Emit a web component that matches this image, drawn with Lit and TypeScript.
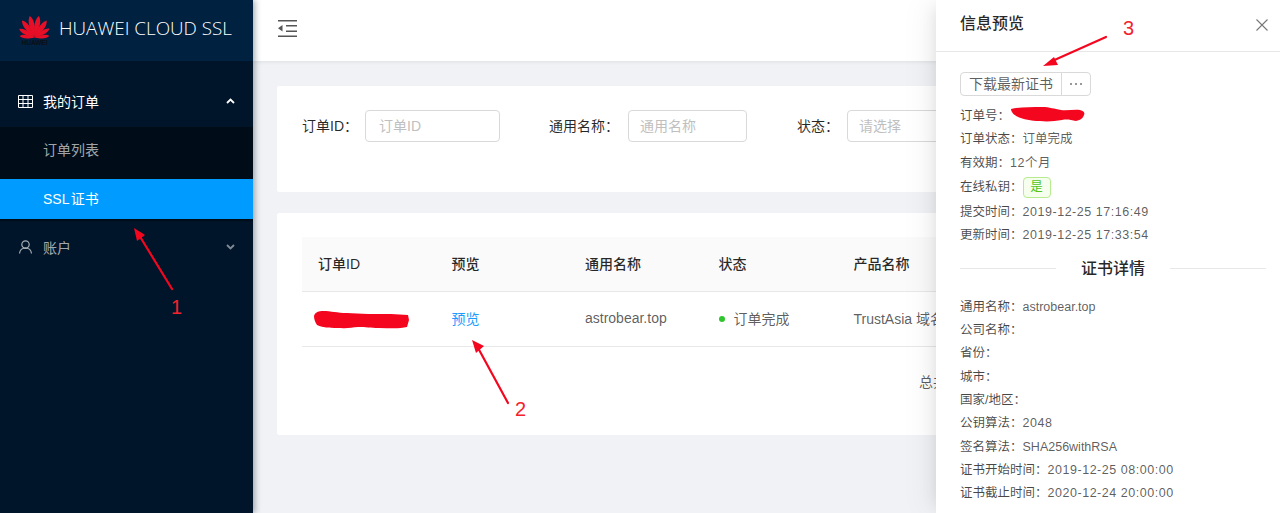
import { LitElement, html, css, svg } from "lit";
import { customElement } from "lit/decorators.js";

const petals: [number, number][] = [
  [-84, 15], [-60, 17.5], [-36, 21], [-12, 22], [12, 22], [36, 21], [60, 17.5], [84, 15],
];
const petal = (l: number) => {
  const w = l * 0.17;
  return `M14.5 21.5C${14.5 - w} ${21.5 - l * 0.5} ${14.5 - w * 0.9} ${21.5 - l * 0.82} ${14.5 - w * 0.05} ${21.5 - l}C${14.5 + w * 0.9} ${21.5 - l * 0.82} ${14.5 + w} ${21.5 - l * 0.5} 14.5 21.5Z`;
};

@customElement("app-root")
export class AppRoot extends LitElement {
  static styles = css`
    :host { display: block; width: 1280px; height: 513px; position: relative; overflow: hidden; background: #f0f2f5;
      font-family: "Liberation Sans", "Noto Sans CJK SC", sans-serif; font-size: 14px; color: rgba(0,0,0,.65); }
    * { box-sizing: border-box; }
    .layout { display: flex; height: 513px; }
    .side { width: 253px; flex: none; background: #001529; color: rgba(255,255,255,.65); box-shadow: 2px 0 6px rgba(0,21,41,.35); z-index: 2; }
    .brand { height: 61px; background: #002140; display: flex; align-items: center; padding: 0 0 5px 20px; gap: 10px; }
    .logo { width: 29px; display: flex; flex-direction: column; align-items: center; margin-top: 6px; }
    .logo svg { display: block; overflow: visible; }
    .logo span { font-size: 6.5px; line-height: 7px; margin-top: 1px; font-weight: 700; color: #0b0f14; }
    .brand-name { color: #fff; font-family: "Open Sans", sans-serif; font-weight: 300; font-size: 18.850px; white-space: nowrap; }
    .menu { padding-top: 16px; }
    .item { height: 50px; display: flex; align-items: center; padding-left: 18px; gap: 10px; }
    .item.open { color: #fff; padding-bottom: 2px; }
    .item .lbl { flex: 1; }
    .chev { margin-right: 18px; display: block; }
    .sub { background: #000c17; padding: 3px 0 9px; height: 52px; }
    .sub div { height: 40px; line-height: 40px; padding-left: 43px; }
    .sel { height: 40px; line-height: 40px; padding-left: 43px; background: #009bff; color: #fff; word-spacing: -2px; }
    .gap { height: 3px; background: linear-gradient(#000c17 1px, #001529 3px); }
    .main { flex: 1; min-width: 0; display: flex; flex-direction: column; }
    .top { height: 61px; background: #fff; box-shadow: 0 1px 4px rgba(0,21,41,.08); display: flex; align-items: center; padding: 0 0 4px 25px; flex: none; }
    .content { padding: 25px 0 0 24px; display: flex; flex-direction: column; gap: 21px; }
    .card { background: #fff; border-radius: 2px; width: 1000px; }
    .search { height: 106px; padding: 24px 25px; display: flex; align-items: flex-start; }
    .lab { line-height: 32px; color: rgba(0,0,0,.85); white-space: nowrap; }
    .input { height: 32px; border: 1px solid #d9d9d9; border-radius: 4px; line-height: 30px; padding-left: 11px; color: #bfbfbf; background: #fff; }
    .i1 { width: 135px; margin: 0 49px 0 7px; padding-left: 13px; }
    .i2 { width: 119px; margin: 0 50px 0 9px; }
    .i3 { width: 170px; margin-left: 8px; }
    .list { height: 222px; padding: 24px 25px; }
    .row { display: grid; grid-template-columns: 133.500px 133.500px 133.500px 135px 1fr; align-items: center; }
    .row > div { padding-left: 16px; white-space: nowrap; }
    .th { height: 55px; padding-bottom: 2px; background: #fafafa; border-bottom: 1px solid #e8e8e8; color: rgba(0,0,0,.85); font-weight: 500; }
    .td { height: 55px; padding-bottom: 3px; border-bottom: 1px solid #e8e8e8; }
    .link { color: #1a9cff; }
    .dot { display: inline-block; width: 6px; height: 6px; border-radius: 50%; background: #2fc52f; margin-right: 9px; vertical-align: 2px; }
    .total { padding: 24px 0 0 617px; white-space: nowrap; }
    .drawer { position: absolute; right: 0; top: 0; width: 344px; height: 513px; background: #fff; box-shadow: -6px 0 16px -8px rgba(0,0,0,.12), -9px 0 28px 0 rgba(0,0,0,.05); z-index: 3; font-size: 12.500px; }
    .d-head { height: 52px; border-bottom: 1px solid #e8e8e8; padding: 12px 24px 0; display: flex; align-items: flex-start; justify-content: space-between; }
    .d-title { font-size: 16px; line-height: 24px; color: rgba(0,0,0,.85); font-weight: 500; }
    .close { margin: 7px -12px 0 0; display: block; }
    .d-body { padding: 20px 24px 0; }
    .btns { display: flex; height: 24px; margin-bottom: 9px; }
    .btn { border: 1px solid #d9d9d9; background: #fff; line-height: 22px; font-size: 14px; color: rgba(0,0,0,.65); }
    .b1 { width: 102px; border-radius: 4px 0 0 4px; text-align: center; }
    .b2 { width: 30px; margin-left: -1px; border-radius: 0 4px 4px 0; display: flex; align-items: center; justify-content: center; gap: 3px; }
    .b2 i { width: 2px; height: 2px; border-radius: 50%; background: #777; }
    .kv { height: 23.300px; line-height: 23.300px; white-space: nowrap; display: flex; align-items: center; }
    .kv.tall { height: 26px; }
    .kv b { font-weight: 400; color: rgba(0,0,0,.72); }
    .wide { letter-spacing: .53px; }
    .tag { display: inline-block; height: 21px; line-height: 19px; width: 28px; text-align: center; border: 1px solid #b7eb8f; background: #f6ffed; color: #52c41a; border-radius: 4px; }
    .divider { display: flex; align-items: center; height: 26px; margin: 7px 0 15.400px; font-size: 16px; font-weight: 500; color: rgba(0,0,0,.85); white-space: nowrap; }
    .divider::before, .divider::after { content: ""; height: 1px; background: #e8e8e8; flex: none; width: 96px; margin-top: 2px; }
    .divider::before { margin-right: 25px; }
    .divider::after { margin-left: 25px; }
    .marks { position: absolute; inset: 0; z-index: 4; pointer-events: none; }
    .num { position: absolute; color: #f5222d; font-size: 20px; line-height: 20px; z-index: 5; }
    .n1 { left: 171px; top: 297px; }
    .n2 { left: 515px; top: 399px; }
    .n3 { left: 1123px; top: 18px; }
  `;

  private kv(k: string, v = "", wide = false) {
    return html`<div class="kv"><b>${k}：</b><span class=${wide ? "wide" : ""}>${v}</span></div>`;
  }

  render() {
    return html`
      <div class="layout">
        <aside class="side">
          <div class="brand">
            <div class="logo">
              <svg width="29" height="22" viewBox="0 0 29 22">
                ${petals.map(([a, l]) => svg`<path transform="rotate(${a} 14.5 21.5)" d=${petal(l)} fill="#e60f27" />`)}
              </svg>
              <span>HUAWEI</span>
            </div>
            <div class="brand-name">HUAWEI CLOUD SSL</div>
          </div>
          <nav class="menu">
            <div class="item open">
              <svg width="15" height="13" viewBox="0 0 15 13" fill="none" stroke="#fff" stroke-width="1"><path d="M.5.500h14v12H.5zM.5 4.500h14M.5 8.500h14M5 .5v12M10 .5v12"/></svg>
              <span class="lbl">我的订单</span>
              <svg class="chev" width="9" height="6" viewBox="0 0 9 6" fill="none" stroke="#fff" stroke-width="1.800"><path d="M1 5l3.500-3.500L8 5"/></svg>
            </div>
            <div class="sub"><div>订单列表</div></div>
            <div class="sel">SSL 证书</div>
            <div class="gap"></div>
            <div class="item">
              <svg width="15" height="14" viewBox="0 0 15 14" fill="none" stroke="rgba(255,255,255,.65)" stroke-width="1.200"><circle cx="7.500" cy="4.500" r="3.700"/><path d="M1.500 13.500c.4-3.500 2.800-5.500 6-5.500s5.600 2 6 5.500"/></svg>
              <span class="lbl">账户</span>
              <svg class="chev" width="9" height="6" viewBox="0 0 9 6" fill="none" stroke="rgba(255,255,255,.5)" stroke-width="1.800"><path d="M1 1l3.500 3.500L8 1"/></svg>
            </div>
          </nav>
        </aside>
        <main class="main">
          <div class="top">
            <svg width="19" height="17" viewBox="0 0 19 17" fill="#555"><path d="M0 0h19v1.500H0zM8 5h11v1.500H8zM8 10.500h11V12H8zM0 15.500h19V17H0zM0 8.300l4.500-3.300v6.600z"/></svg>
          </div>
          <div class="content">
            <section class="card search">
              <span class="lab">订单ID：</span><div class="input i1">订单ID</div>
              <span class="lab">通用名称：</span><div class="input i2">通用名称</div>
              <span class="lab">状态：</span><div class="input i3">请选择</div>
            </section>
            <section class="card list">
              <div class="row th"><div>订单ID</div><div>预览</div><div>通用名称</div><div>状态</div><div>产品名称</div></div>
              <div class="row td"><div></div><div class="link">预览</div><div>astrobear.top</div><div><span class="dot"></span>订单完成</div><div>TrustAsia 域名</div></div>
              <div class="total">总共</div>
            </section>
          </div>
        </main>
      </div>
      <aside class="drawer">
        <div class="d-head"><span class="d-title">信息预览</span>
          <svg class="close" width="12" height="12" viewBox="0 0 12 12" stroke="#777" stroke-width="1.100"><path d="M.5.500l11 11M11.500.500l-11 11"/></svg>
        </div>
        <div class="d-body">
          <div class="btns"><div class="btn b1">下载最新证书</div><div class="btn b2"><i></i><i></i><i></i></div></div>
          ${this.kv("订单号")}
          ${this.kv("订单状态", "订单完成")}
          ${this.kv("有效期", "12个月", true)}
          <div class="kv tall"><b>在线私钥：</b><span class="tag">是</span></div>
          ${this.kv("提交时间", "2019-12-25 17:16:49", true)}
          ${this.kv("更新时间", "2019-12-25 17:33:54", true)}
          <div class="divider">证书详情</div>
          ${this.kv("通用名称", "astrobear.top")}
          ${this.kv("公司名称")}
          ${this.kv("省份")}
          ${this.kv("城市")}
          ${this.kv("国家/地区")}
          ${this.kv("公钥算法", "2048", true)}
          ${this.kv("签名算法", "SHA256withRSA")}
          ${this.kv("证书开始时间", "2019-12-25 08:00:00", true)}
          ${this.kv("证书截止时间", "2020-12-24 20:00:00", true)}
        </div>
      </aside>
      <svg class="marks" width="1280" height="513" viewBox="0 0 1280 513">
        <g fill="none" stroke="#f5061f" stroke-width="2.200" stroke-linecap="round">
          <path d="M172 289L139 235"/><path d="M508 403L477 346"/><path d="M1106 37L1050 62"/>
        </g>
        <g fill="#f5061f">
          <path d="M134 228l11 7-8 6z"/><path d="M472 340l12 6-8 7z"/><path d="M1043 66l11-9 4 8z"/>
          <path d="M314 316c1-4 5-5 9-5 8 0 14 2 24 2 12 1 30 1 44 1l17 1 1 5-2 7c-8 2-18 1-28 1-9 0-13-1-21-1-6 0-11 2-17 1-9 0-18 0-24-3-2-3-3-6-3-9z"/>
          <path d="M1011 109c9-2 20-2 31-2 8 0 12 2 19 3 6 1 13-1 19 0 4 1 5 3 4 5-1 3-3 5-8 6-5-1-9-2-14-1-7 1-14 2-22 1-9 0-17-2-22-4-4-2-7-5-7-8z"/>
        </g>
      </svg>
      <span class="num n1">1</span><span class="num n2">2</span><span class="num n3">3</span>
    `;
  }
}
